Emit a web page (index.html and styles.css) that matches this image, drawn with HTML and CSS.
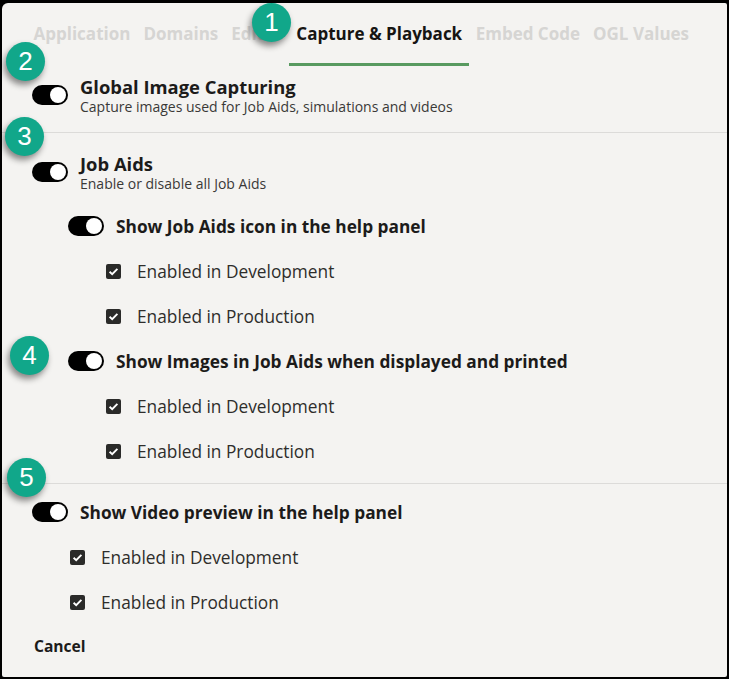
FILE: index.html
```html
<!DOCTYPE html>
<html lang="en">
<head>
<meta charset="utf-8">
<title>Capture &amp; Playback</title>
<link rel="stylesheet" href="styles.css">
</head>
<body>
<div class="frame">
  <nav class="tabs">
    <span class="tab">Application</span>
    <span class="tab">Domains</span>
    <span class="tab editor">Editor</span>
    <span class="tab active">Capture &amp; Playback</span>
    <span class="tab">Embed Code</span>
    <span class="tab">OGL Values</span>
  </nav>

  <section class="section first">
    <div class="main-row">
      <span class="toggle"></span>
      <div class="main-text">
        <div class="title">Global Image Capturing</div>
        <div class="desc">Capture images used for Job Aids, simulations and videos</div>
      </div>
    </div>
  </section>

  <hr class="divider">

  <section class="section second">
    <div class="main-row">
      <span class="toggle"></span>
      <div class="main-text">
        <div class="title">Job Aids</div>
        <div class="desc">Enable or disable all Job Aids</div>
      </div>
    </div>
    <div class="group indent">
      <div class="row"><span class="toggle"></span><span class="label">Show Job Aids icon in the help panel</span></div>
      <div class="row check-row"><span class="check"><svg viewBox="0 0 15 15" width="15" height="15"><rect width="15" height="15" rx="2" fill="#2a2a29"/><path d="M3.6 7.8 L6.2 10.2 L11.4 4.9" fill="none" stroke="#fff" stroke-width="1.9"/></svg></span><span class="clabel">Enabled in Development</span></div>
      <div class="row check-row"><span class="check"><svg viewBox="0 0 15 15" width="15" height="15"><rect width="15" height="15" rx="2" fill="#2a2a29"/><path d="M3.6 7.8 L6.2 10.2 L11.4 4.9" fill="none" stroke="#fff" stroke-width="1.9"/></svg></span><span class="clabel">Enabled in Production</span></div>
      <div class="row"><span class="toggle"></span><span class="label">Show Images in Job Aids when displayed and printed</span></div>
      <div class="row check-row"><span class="check"><svg viewBox="0 0 15 15" width="15" height="15"><rect width="15" height="15" rx="2" fill="#2a2a29"/><path d="M3.6 7.8 L6.2 10.2 L11.4 4.9" fill="none" stroke="#fff" stroke-width="1.9"/></svg></span><span class="clabel">Enabled in Development</span></div>
      <div class="row check-row"><span class="check"><svg viewBox="0 0 15 15" width="15" height="15"><rect width="15" height="15" rx="2" fill="#2a2a29"/><path d="M3.6 7.8 L6.2 10.2 L11.4 4.9" fill="none" stroke="#fff" stroke-width="1.9"/></svg></span><span class="clabel">Enabled in Production</span></div>
    </div>
  </section>

  <hr class="divider">

  <section class="section third">
    <div class="group">
      <div class="row"><span class="toggle"></span><span class="label">Show Video preview in the help panel</span></div>
      <div class="row check-row"><span class="check"><svg viewBox="0 0 15 15" width="15" height="15"><rect width="15" height="15" rx="2" fill="#2a2a29"/><path d="M3.6 7.8 L6.2 10.2 L11.4 4.9" fill="none" stroke="#fff" stroke-width="1.9"/></svg></span><span class="clabel">Enabled in Development</span></div>
      <div class="row check-row"><span class="check"><svg viewBox="0 0 15 15" width="15" height="15"><rect width="15" height="15" rx="2" fill="#2a2a29"/><path d="M3.6 7.8 L6.2 10.2 L11.4 4.9" fill="none" stroke="#fff" stroke-width="1.9"/></svg></span><span class="clabel">Enabled in Production</span></div>
    </div>
  </section>

  <div class="footer"><span class="cancel">Cancel</span></div>

  <span class="badge b1">1</span>
  <span class="badge b2">2</span>
  <span class="badge b3">3</span>
  <span class="badge b4">4</span>
  <span class="badge b5">5</span>
</div>
</body>
</html>
```

FILE: styles.css
```css
html, body {
  margin: 0;
  padding: 0;
  background: #000;
}
body {
  font-family: "Open Sans", Lato, sans-serif;
  color: #1c1b1a;
}
.frame {
  position: relative;
  box-sizing: border-box;
  margin: 3px 2px 2px 2px;
  height: 674px;
  background: #f4f3f1;
  border-radius: 6px 2px 2px 2px;
  overflow: hidden;
}
.tabs {
  display: flex;
  padding: 19px 0 0 25px;
  height: 44px;
  align-items: flex-start;
}
.tab {
  box-sizing: border-box;
  padding: 0 6.5px;
  height: 44px;
  line-height: 24px;
  font-size: 17px;
  font-weight: 700;
  color: #d6d5d3;
  white-space: nowrap;
}
.tab.editor {
  width: 64px;
  overflow: hidden;
}
.tab.active {
  color: #161513;
  padding: 0 7px 0 7.5px;
  border-bottom: 3px solid #589a60;
}
.section {
  padding-left: 30px;
}
.section.first {
  padding-top: 8.5px;
  padding-bottom: 17px;
}
.section.second {
  padding-top: 19px;
  padding-bottom: 9.5px;
}
.section.third {
  padding-top: 5.5px;
}
.main-row {
  display: flex;
  align-items: center;
  gap: 12px;
}
.title {
  font-size: 18.4px;
  line-height: 23px;
  font-weight: 700;
  color: #1c1b1a;
}
.desc {
  font-size: 14px;
  line-height: 17px;
  color: #3a3937;
}
.divider {
  margin: 0;
  border: 0;
  height: 1px;
  background: #dcdbd9;
}
.group.indent {
  margin-top: 12px;
  padding-left: 36px;
}
.row {
  display: flex;
  align-items: center;
  height: 45px;
  gap: 12px;
}
.check-row {
  padding-left: 38px;
  gap: 16px;
}
.label {
  font-size: 17.3px;
  font-weight: 700;
  color: #1c1b1a;
  white-space: nowrap;
}
.clabel {
  font-size: 17.3px;
  color: #2e2d2b;
  white-space: nowrap;
}
.check {
  display: inline-flex;
  width: 15px;
  height: 15px;
}
.toggle {
  position: relative;
  flex: none;
  width: 36px;
  height: 20px;
  border-radius: 10px;
  background: #000;
}
.toggle::after {
  content: "";
  position: absolute;
  right: 2px;
  top: 2px;
  width: 16px;
  height: 16px;
  border-radius: 50%;
  background: #fff;
}
.footer {
  padding: 10px 0 0 32px;
}
.cancel {
  font-size: 15.6px;
  line-height: 20px;
  font-weight: 700;
  color: #1c1b1a;
}
.badge {
  position: absolute;
  width: 39px;
  height: 39px;
  border-radius: 50%;
  background: #11a78a;
  color: #fff;
  font-family: "Liberation Sans", Arial, sans-serif;
  font-size: 26px;
  line-height: 39px;
  text-align: center;
  box-shadow: -2px 4px 6px rgba(0, 0, 0, 0.45);
}
.b1 { left: 250px; top: 0px; }
.b2 { left: 4px; top: 39px; }
.b3 { left: 3px; top: 114px; }
.b4 { left: 8px; top: 333px; }
.b5 { left: 5px; top: 455px; }
```
